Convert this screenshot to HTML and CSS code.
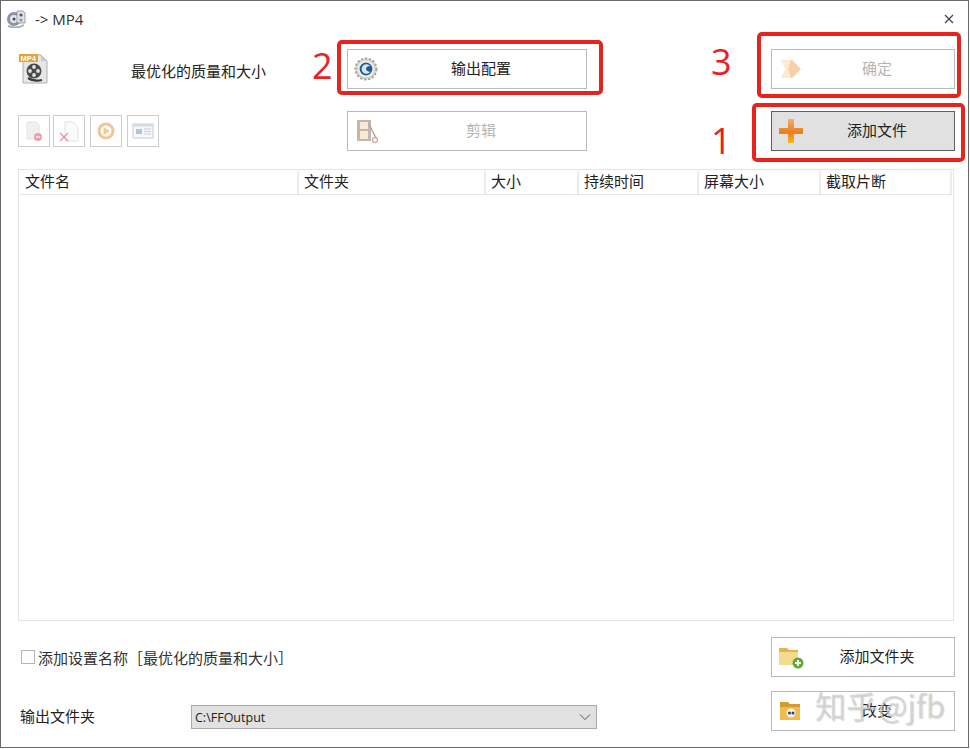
FILE: index.html
```html
<!DOCTYPE html>
<html lang="zh">
<head>
    <meta charset="UTF-8">
    <meta name="viewport" content="width=device-width, initial-scale=1.0">
    <title>-> MP4</title>
    <link rel="stylesheet" href="styles.css">
</head>
<body>
<div class="window">
    <div class="titlebar">
        <svg class="app-icon" width="20" height="18" viewBox="0 0 20 18">
            <circle cx="8" cy="9" r="7" fill="#8b94a6"/>
            <circle cx="8" cy="9" r="4" fill="#e4e7ec"/>
            <circle cx="8" cy="9" r="1.500" fill="#3f4a5e"/>
            <path d="M11 1h6l2 2v10h-8z" fill="#dfe2e7" stroke="#7d838e" stroke-width=".7"/>
            <circle cx="15" cy="5" r="1.600" fill="#4f5a6e"/>
            <circle cx="15" cy="10" r="1.600" fill="#8d96a6"/>
            <path d="M2 16c5 2 11 2 16-1" stroke="#aab0ba" stroke-width="2" fill="none"/>
        </svg>
        <span class="title-text">-&gt; MP4</span>
        <svg class="close-icon" width="10" height="10" viewBox="0 0 10 10">
            <path d="M1 1l8 8M9 1l-8 8" stroke="#444" stroke-width="1.200" fill="none"/>
        </svg>
    </div>

    <div class="toolbar">
        <div class="profile">
            <svg class="soft" width="30" height="32" viewBox="0 0 30 32">
                <path d="M4 2h18l6 6v22H4z" fill="#e6e6e6" stroke="#b0b0b0"/>
                <path d="M22 2v6h6z" fill="#c8c8c8"/>
                <circle cx="15" cy="18" r="7.500" fill="#4a4a4a"/>
                <circle cx="15" cy="14" r="1.900" fill="#e2e2e2"/>
                <circle cx="11" cy="18" r="1.900" fill="#e2e2e2"/>
                <circle cx="19" cy="18" r="1.900" fill="#e2e2e2"/>
                <circle cx="15" cy="22" r="1.900" fill="#e2e2e2"/>
                <path d="M9 25c4 3 9 3 14 2" stroke="#3a3a3a" stroke-width="2.200" fill="none"/>
                <rect x="0" y="1" width="19" height="8" fill="#e3a632"/>
                <text x="1.500" y="8" class="mp4-label">MP4</text>
            </svg>
            <span class="profile-name">最优化的质量和大小</span>
        </div>
        <button class="btn btn-wide">
            <svg class="btn-icon soft" width="24" height="24" viewBox="0 0 24 24">
                <circle cx="12" cy="12" r="10.500" fill="#dcd8cc" stroke="#aaa597" stroke-width="2" stroke-dasharray="2.400 1.600"/>
                <circle cx="12" cy="12" r="8" fill="#eef1f5"/>
                <circle cx="12" cy="12" r="6.400" fill="#1e5a96"/>
                <path d="M16.500 9.500a4.800 4.800 0 1 0 0 5 3.500 3.500 0 0 1-4.500-2.500 3 3 0 0 1 4.500-2.500z" fill="#d4e6f4"/>
            </svg>
            <span>输出配置</span>
        </button>
        <div></div>
        <button class="btn btn-wide btn-disabled">
            <svg class="btn-icon faded soft" width="26" height="24" viewBox="0 0 26 24">
                <path d="M3 3h11l9 9-9 9H3l5-9z" fill="#f2a050"/>
                <path d="M3 3h10l-3 9 3 9H3l5-9z" fill="#fad6a8"/>
            </svg>
            <span>确定</span>
        </button>

        <div class="small-tools">
            <button class="btn btn-small">
                <svg class="faded soft" width="24" height="24" viewBox="0 0 24 24">
                    <path d="M5 3h9l3 3v14H5z" fill="#e2e2e2" stroke="#c6c6c6"/>
                    <circle cx="16" cy="18" r="4" fill="#d9425a"/>
                    <path d="M13.800 18h4.400" stroke="#fff" stroke-width="1.300"/>
                </svg>
            </button>
            <button class="btn btn-small">
                <svg class="faded soft" width="24" height="24" viewBox="0 0 24 24">
                    <path d="M8 3h8l5 5v14H8z" fill="#f8f8f8" stroke="#c8c8c8"/>
                    <path d="M3 14l8 8M11 14l-8 8" stroke="#c8283a" stroke-width="1.200"/>
                </svg>
            </button>
            <button class="btn btn-small btn-gap">
                <svg class="faded soft" width="24" height="24" viewBox="0 0 24 24">
                    <circle cx="12" cy="12" r="7" fill="#fff" stroke="#e88a2c" stroke-width="3"/>
                    <path d="M9.500 8l6.500 4-6.500 4z" fill="#f0962e"/>
                </svg>
            </button>
            <button class="btn btn-small btn-gap">
                <svg class="faded soft" width="24" height="24" viewBox="0 0 24 24">
                    <rect x="2" y="5" width="20" height="14" fill="#eef2f6" stroke="#8a9aac"/>
                    <rect x="2" y="5" width="20" height="2.500" fill="#a8b8c8"/>
                    <rect x="5" y="10" width="6" height="5" fill="#5b8fc8"/>
                    <path d="M13 10h7M13 12.500h7M13 15h7" stroke="#8a9aac"/>
                </svg>
            </button>
        </div>
        <button class="btn btn-wide btn-disabled">
            <svg class="btn-icon faded soft" width="26" height="26" viewBox="0 0 26 26">
                <rect x="3" y="2" width="14" height="21" fill="#8a7058"/>
                <rect x="6" y="4" width="8" height="7" fill="#f0d8b0"/>
                <rect x="6" y="13" width="8" height="8" fill="#f0d8b0"/>
                <path d="M15 6l7 14" stroke="#555" stroke-width="1.500"/>
                <circle cx="21" cy="22" r="2.500" fill="none" stroke="#b05050" stroke-width="1.300"/>
            </svg>
            <span>剪辑</span>
        </button>
        <div></div>
        <button class="btn btn-wide btn-active">
            <svg class="btn-icon soft" width="26" height="26" viewBox="0 0 26 26">
                <defs>
                    <linearGradient id="plus-fill" x1="0" y1="0" x2="0" y2="1">
                        <stop offset="0" stop-color="#f2b070"/>
                        <stop offset="0.550" stop-color="#ee7d1c"/>
                        <stop offset="1" stop-color="#f6b81e"/>
                    </linearGradient>
                </defs>
                <path d="M10 1h6v9h9v6h-9v9h-6v-9H1v-6h9z" fill="url(#plus-fill)"/>
            </svg>
            <span>添加文件</span>
        </button>
    </div>

    <div class="file-list">
        <div class="list-header">
            <div class="col">文件名</div>
            <div class="col">文件夹</div>
            <div class="col">大小</div>
            <div class="col">持续时间</div>
            <div class="col">屏幕大小</div>
            <div class="col">截取片断</div>
        </div>
    </div>

    <div class="bottom">
        <label class="check-row">
            <span class="checkbox"></span>
            <span>添加设置名称［最优化的质量和大小］</span>
        </label>
        <button class="btn btn-wide">
            <svg class="btn-icon soft" width="26" height="26" viewBox="0 0 26 26">
                <path d="M1 4h8l2 2h9v13H1z" fill="#e4b450"/>
                <path d="M1 8h19v13H1z" fill="#f6da90"/>
                <circle cx="20" cy="19" r="5.500" fill="#5fa83a"/>
                <path d="M20 16v6M17 19h6" stroke="#fff" stroke-width="1.800"/>
            </svg>
            <span>添加文件夹</span>
        </button>

        <div class="output-row">
            <span class="output-label">输出文件夹</span>
            <div class="select">
                <span>C:\FFOutput</span>
                <svg width="12" height="8" viewBox="0 0 12 8">
                    <path d="M1 1.500l5 5 5-5" stroke="#555" fill="none"/>
                </svg>
            </div>
        </div>
        <button class="btn btn-wide">
            <svg class="btn-icon soft" width="24" height="22" viewBox="0 0 24 22">
                <path d="M2 2h8l2 2h10v16H2z" fill="#d89a2c"/>
                <path d="M2 7h20v13H2z" fill="#f0bc50"/>
                <circle cx="13" cy="13" r="4.500" fill="#f2f2f2"/>
                <circle cx="11.500" cy="13" r="1.500" fill="#345"/>
                <circle cx="15" cy="13" r="1.500" fill="#345"/>
            </svg>
            <span>改变</span>
        </button>
    </div>

    <!-- marcas por cima da captura -->
    <div class="mark mark-2"></div>
    <div class="mark mark-3"></div>
    <div class="mark mark-1"></div>
    <span class="mark-num num-2">2</span>
    <span class="mark-num num-3">3</span>
    <span class="mark-num num-1">1</span>
    <span class="watermark">知乎 @jfb</span>
</div>
</body>
</html>
```

FILE: styles.css
```css
/* Janela */
body {
    margin: 0;
    background-color: #ffffff;
    font-family: "Noto Sans CJK SC", "Open Sans", sans-serif;
    font-size: 15px;
    color: #222222;
}

.window {
    position: relative;
    width: 969px;
    height: 748px;
    box-sizing: border-box;
    border: 1px solid #6a6a6a;
    display: flex;
    flex-direction: column;
    overflow: hidden;
    background-color: #ffffff;
}

.titlebar {
    height: 36px;
    display: flex;
    align-items: center;
    padding: 0 14px 0 5px;
    flex-shrink: 0;
}

.app-icon {
    margin-right: 9px;
}

.title-text {
    font-family: "Open Sans", sans-serif;
    font-size: 15px;
    color: #333333;
}

.close-icon {
    margin-left: auto;
}

/* Botoes e perfil */
.toolbar {
    display: grid;
    grid-template-columns: 329px 240px 184px 184px;
    grid-template-rows: 40px 40px;
    row-gap: 22px;
    padding: 12px 0 0 17px;
}

.btn {
    font-family: inherit;
    font-size: 15px;
    color: #222222;
    background-color: #ffffff;
    border: 1px solid #b9b9b9;
    padding: 0;
    display: flex;
    align-items: center;
}

.btn-wide {
    position: relative;
    justify-content: center;
    padding: 0 0 3px 28px;
}

.btn-icon {
    position: absolute;
    left: 6px;
    top: 50%;
    transform: translateY(-50%);
}

.btn-disabled {
    color: #b4b4b4;
}

.btn-active {
    background-color: #e1e1e1;
    border-color: #5f5f5f;
}

.btn-small {
    width: 32px;
    height: 32px;
    justify-content: center;
    border-color: #cccccc;
}

.btn-gap {
    margin-left: 2px;
}

.faded {
    opacity: 0.5;
}

/* a captura original e um jpeg meio borrado */
.soft {
    filter: blur(0.4px);
}

.profile {
    display: flex;
    align-items: center;
    padding-left: 1px;
}

.profile-name {
    margin: 4px 0 0 82px;
    line-height: 20px;
}

.mp4-label {
    font-family: "Liberation Sans", sans-serif;
    font-size: 7.500px;
    font-weight: bold;
    fill: #ffffff;
}

.small-tools {
    display: flex;
    align-items: center;
    gap: 3px;
}

/* Lista de arquivos */
.file-list {
    margin: 18px 0 0 17px;
    width: 936px;
    height: 452px;
    box-sizing: border-box;
    border: 1px solid #e4e4e4;
    padding: 1px;
    flex-shrink: 0;
}

.list-header {
    display: grid;
    grid-template-columns: 279px 187px 93px 120px 122px 131px;
    height: 23px;
    border-bottom: 1px solid #e6e6e6;
}

.col {
    padding-left: 5px;
    line-height: 20px;
    border-right: 2px solid #ececec;
    overflow: hidden;
}

/* Parte de baixo */
.bottom {
    display: grid;
    grid-template-columns: 753px 184px;
    grid-template-rows: 40px 40px;
    row-gap: 14px;
    padding: 16px 0 0 17px;
}

.check-row {
    display: flex;
    align-items: center;
    padding-left: 3px;
    gap: 3px;
    color: #333333;
}

.checkbox {
    width: 12px;
    height: 12px;
    border: 1px solid #b5b5b5;
    background-color: #ffffff;
}

.output-row {
    display: flex;
    align-items: flex-end;
    padding: 0 0 2px 2px;
}

.output-label {
    width: 171px;
    line-height: 24px;
    padding-bottom: 1px;
}

.select {
    width: 406px;
    height: 24px;
    box-sizing: border-box;
    border: 1px solid #a9a9a9;
    background-color: #e1e1e1;
    display: flex;
    align-items: center;
    justify-content: space-between;
    padding: 0 5px 0 3px;
    font-family: "Open Sans", sans-serif;
    font-size: 12.500px;
}

/* Marcas vermelhas */
.mark {
    position: absolute;
    box-sizing: border-box;
    border: 4px solid #e8231e;
    border-radius: 5px;
}

.mark-2 {
    left: 336px;
    top: 39px;
    width: 266px;
    height: 55px;
}

.mark-3 {
    left: 756px;
    top: 31px;
    width: 204px;
    height: 66px;
}

.mark-1 {
    left: 751px;
    top: 102px;
    width: 213px;
    height: 59px;
}

.mark-num {
    position: absolute;
    font-family: "Open Sans", sans-serif;
    font-size: 36px;
    line-height: 40px;
    color: #e8231e;
}

.num-2 {
    left: 311px;
    top: 45px;
}

.num-3 {
    left: 710px;
    top: 41px;
}

.num-1 {
    left: 710px;
    top: 120px;
}

/* marca d'agua por cima do botao, como na captura */
.watermark {
    position: absolute;
    left: 814px;
    top: 684px;
    font-size: 31px;
    line-height: 40px;
    word-spacing: -6px;
    color: rgba(205, 205, 205, 0.7);
    text-shadow: 1px 1px 1px rgba(150, 150, 150, 0.35);
    white-space: nowrap;
}
```
